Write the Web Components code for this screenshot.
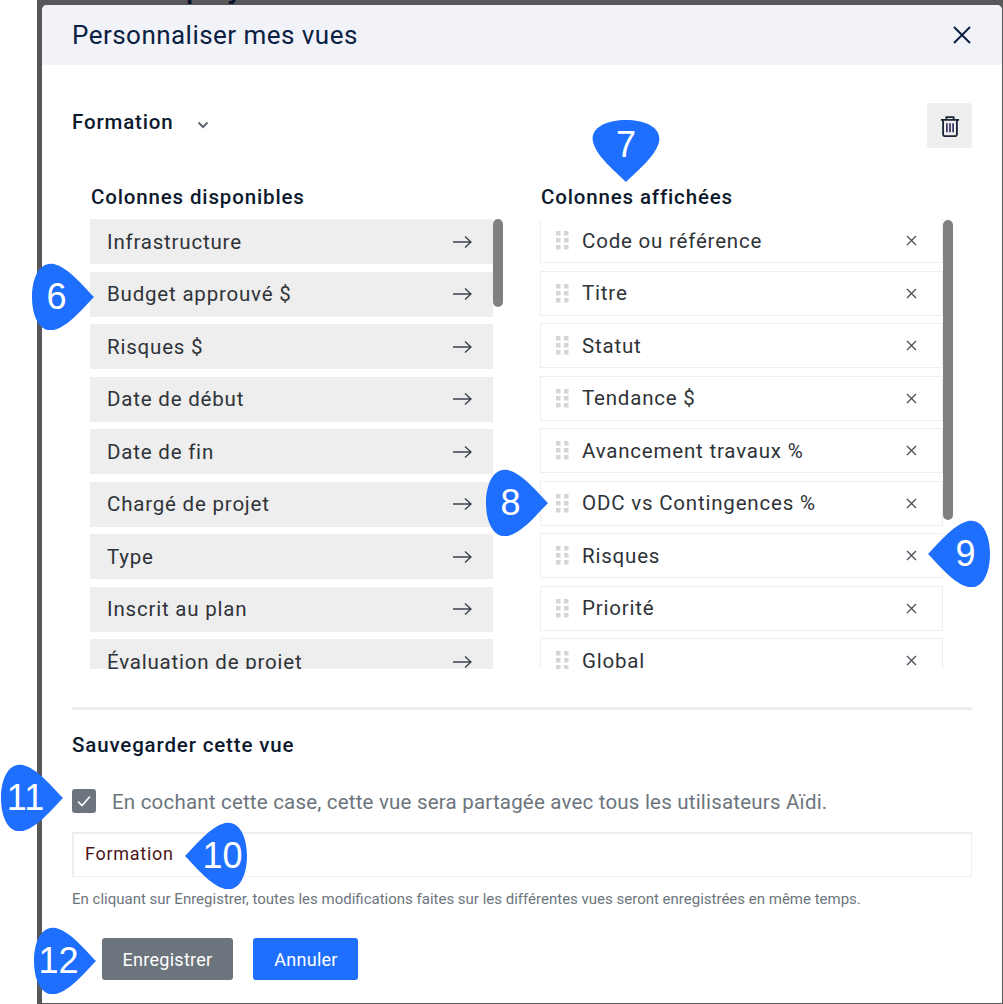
<!DOCTYPE html>
<html lang="fr">
<head>
<meta charset="utf-8">
<title>Personnaliser mes vues</title>
<style>
    html, body { margin: 0; padding: 0; background: #fff; }
    body { font-family: Roboto, "Liberation Sans", sans-serif; width: 1003px; height: 1004px; overflow: hidden; position: relative; }
</style>
</head>
<body>
<view-stage>
    <view-dialog heading="Personnaliser mes vues">
        <view-select slot="top" label="Formation"></view-select>

        <column-list slot="left" heading="Colonnes disponibles" thumb-top="0" thumb-height="88">
            <avail-row>Infrastructure</avail-row>
            <avail-row>Budget approuvé $</avail-row>
            <avail-row>Risques $</avail-row>
            <avail-row>Date de début</avail-row>
            <avail-row>Date de fin</avail-row>
            <avail-row>Chargé de projet</avail-row>
            <avail-row>Type</avail-row>
            <avail-row>Inscrit au plan</avail-row>
            <avail-row>Évaluation de projet</avail-row>
        </column-list>

        <column-list slot="right" heading="Colonnes affichées" thumb-top="1" thumb-height="300" shift="-0.75">
            <shown-row>Code ou référence</shown-row>
            <shown-row>Titre</shown-row>
            <shown-row>Statut</shown-row>
            <shown-row>Tendance $</shown-row>
            <shown-row>Avancement travaux %</shown-row>
            <shown-row>ODC vs Contingences %</shown-row>
            <shown-row>Risques</shown-row>
            <shown-row>Priorité</shown-row>
            <shown-row>Global</shown-row>
        </column-list>

        <save-form slot="bottom" value="Formation"></save-form>
    </view-dialog>

    <map-pin n="6" dir="right" x="32" y="263"></map-pin>
    <map-pin n="7" dir="down" x="592" y="120"></map-pin>
    <map-pin n="8" dir="right" x="486" y="469"></map-pin>
    <map-pin n="9" dir="left" x="928" y="520"></map-pin>
    <map-pin n="10" dir="left" x="185" y="822"></map-pin>
    <map-pin n="11" dir="right" x="1" y="764"></map-pin>
    <map-pin n="12" dir="right" x="34" y="927"></map-pin>
</view-stage>

<script>
const ROBOTO = 'Roboto, "Liberation Sans", sans-serif';

class ViewStage extends HTMLElement {
    constructor() {
        super();
        this.attachShadow({ mode: 'open' });
        this.shadowRoot.innerHTML = `
            <style>
                :host { display: block; position: relative; width: 1003px; height: 1004px; overflow: hidden; }
                .backdrop {
                    box-sizing: border-box;
                    margin-left: 37px;
                    width: 966px;
                    height: 1004px;
                    padding: 5px 1px 1px 5px;
                    background: #58585a;
                }
                /* page behind the dialog, only the descenders stick out */
                .behind {
                    position: absolute;
                    left: 186px;
                    top: -30px;
                    font: 500 30px/36px ${ROBOTO};
                    color: #0c1230;
                }
            </style>
            <div class="backdrop">
                <div class="behind">projet</div>
                <slot></slot>
            </div>
        `;
    }
}

class ViewDialog extends HTMLElement {
    constructor() {
        super();
        this.attachShadow({ mode: 'open' });
        this.shadowRoot.innerHTML = `
            <style>
                :host {
                    display: block;
                    position: relative;
                    height: 998px;
                    background: #fff;
                    border-radius: 5px 5px 0 0;
                    overflow: hidden;
                    font-family: ${ROBOTO};
                }
                header {
                    display: flex;
                    align-items: center;
                    justify-content: space-between;
                    height: 60px;
                    padding: 0 31px 0 30px;
                    background: #f1f3f8;
                }
                h1 { margin: 0; font-size: 26px; font-weight: 400; letter-spacing: .46px; color: #0b1f44; }
                svg { display: block; }
                .body { padding: 38px 30px 0; }
                .columns {
                    display: grid;
                    grid-template-columns: 413px 413px;
                    column-gap: 37px;
                    margin: 37px 0 38px 18px;
                }
            </style>
            <header>
                <h1>${this.getAttribute('heading')}</h1>
                <svg width="18" height="18" viewBox="0 0 18 18" fill="none" stroke="#0b1f44" stroke-width="2">
                    <path d="M1 1l16 16M17 1L1 17"/>
                </svg>
            </header>
            <div class="body">
                <slot name="top"></slot>
                <div class="columns">
                    <slot name="left"></slot>
                    <slot name="right"></slot>
                </div>
                <slot name="bottom"></slot>
            </div>
        `;
    }
}

class ViewSelect extends HTMLElement {
    constructor() {
        super();
        this.attachShadow({ mode: 'open' });
        this.shadowRoot.innerHTML = `
            <style>
                :host { display: flex; align-items: center; height: 45px; }
                .label { margin-bottom: 8px; font-size: 20.5px; font-weight: 500; letter-spacing: .85px; color: #0d1a2e; }
                .chev { margin: 0 0 2px 23px; }
                button {
                    margin-left: auto;
                    width: 45px;
                    height: 45px;
                    padding: 0;
                    border: 0;
                    border-radius: 3px;
                    background: #eeeeee;
                    display: flex;
                    align-items: center;
                    justify-content: center;
                }
                svg { display: block; }
            </style>
            <span class="label">${this.getAttribute('label')}</span>
            <svg class="chev" width="12" height="8" viewBox="0 0 12 8" fill="none" stroke="#5d6673" stroke-width="2">
                <path d="M1.5 1.5L6 6l4.5-4.5"/>
            </svg>
            <button>
                <svg width="20" height="22" viewBox="0 0 22 24" fill="none" stroke="#1c2536">
                    <path stroke-width="2" d="M1 5.2h20M7 5V2.2h8V5"/>
                    <path stroke-width="2" d="M3.4 5.2v16a2 2 0 0 0 2 2h11.2a2 2 0 0 0 2-2v-16"/>
                    <path stroke-width="1.9" stroke="#3a3566" d="M7.6 9v10M11 9v10M14.4 9v10"/>
                </svg>
            </button>
        `;
    }
}

class ColumnList extends HTMLElement {
    constructor() {
        super();
        this.attachShadow({ mode: 'open' });
        this.render();
    }

    render() {
        const thumbTop = this.getAttribute('thumb-top') || 0;
        const thumbHeight = this.getAttribute('thumb-height') || 100;
        const shift = this.getAttribute('shift') || 0;
        this.shadowRoot.innerHTML = `
            <style>
                :host { display: block; }
                h2 {
                    margin: 0 0 10px 1px;
                    font-size: 20.5px;
                    line-height: 24px;
                    font-weight: 500;
                    letter-spacing: .85px;
                    color: #0d1a2e;
                }
                .wrap { display: flex; height: 450px; }
                .list { width: 403px; height: 450px; overflow: hidden; }
                .inner { display: flex; flex-direction: column; gap: 7.5px; margin-top: ${shift}px; }
                .track { width: 10px; height: 450px; }
                .thumb {
                    width: 10px;
                    height: ${thumbHeight}px;
                    margin-top: ${thumbTop}px;
                    background: #808080;
                    border-radius: 5px;
                }
            </style>
            <h2>${this.getAttribute('heading')}</h2>
            <div class="wrap">
                <div class="list"><div class="inner"><slot></slot></div></div>
                <div class="track"><div class="thumb"></div></div>
            </div>
        `;
    }
}

class AvailRow extends HTMLElement {
    constructor() {
        super();
        this.attachShadow({ mode: 'open' });
        this.shadowRoot.innerHTML = `
            <style>
                :host {
                    box-sizing: border-box;
                    display: flex;
                    align-items: center;
                    justify-content: space-between;
                    flex: none;
                    height: 45px;
                    padding: 0 21px 0 17px;
                    background: #eeeeee;
                    font-size: 20.5px;
                    letter-spacing: .8px;
                    color: #2f3338;
                }
                svg { display: block; }
            </style>
            <slot></slot>
            <svg width="20" height="14" viewBox="0 0 20 14" fill="none" stroke="#3b4250" stroke-width="1.4">
                <path d="M1 7h18M13 1.5L19 7l-6 5.5"/>
            </svg>
        `;
    }
}

class ShownRow extends HTMLElement {
    constructor() {
        super();
        this.attachShadow({ mode: 'open' });
        this.shadowRoot.innerHTML = `
            <style>
                :host {
                    box-sizing: border-box;
                    display: flex;
                    align-items: center;
                    flex: none;
                    height: 45px;
                    padding: 0 25px 0 15px;
                    border: 1px solid #eeeeee;
                    font-size: 20.5px;
                    letter-spacing: .8px;
                    color: #2f3338;
                }
                svg { display: block; flex: none; }
                .grip { margin-right: 13px; }
                .x { margin-left: auto; }
            </style>
            <svg class="grip" width="13" height="19" viewBox="0 0 13 19" fill="#d6d6d6">
                <rect x="0" y="0" width="4.5" height="4.5"/><rect x="8" y="0" width="4.5" height="4.5"/>
                <rect x="0" y="7" width="4.5" height="4.5"/><rect x="8" y="7" width="4.5" height="4.5"/>
                <rect x="0" y="14" width="4.5" height="4.5"/><rect x="8" y="14" width="4.5" height="4.5"/>
            </svg>
            <slot></slot>
            <svg class="x" width="11" height="11" viewBox="0 0 11 11" fill="none" stroke="#4a4f57" stroke-width="1.3">
                <path d="M1 1l9 9M10 1l-9 9"/>
            </svg>
        `;
    }
}

class SaveForm extends HTMLElement {
    constructor() {
        super();
        this.attachShadow({ mode: 'open' });
        this.shadowRoot.innerHTML = `
            <style>
                :host { display: block; border-top: 3px solid #eeeeee; font-family: ${ROBOTO}; }
                h3 {
                    margin: 23px 0 0;
                    font-size: 20.5px;
                    line-height: 24px;
                    font-weight: 500;
                    letter-spacing: .85px;
                    color: #0d1a2e;
                }
                .check { display: flex; align-items: center; gap: 16px; margin-top: 32px; height: 24px; }
                .box {
                    width: 24px;
                    height: 24px;
                    flex: none;
                    border-radius: 3px;
                    background: #6c757d;
                    display: flex;
                    align-items: center;
                    justify-content: center;
                }
                .check span { padding-top: 2px; font-size: 20.5px; letter-spacing: .2px; color: #6c757d; }
                .input {
                    box-sizing: border-box;
                    height: 45px;
                    margin-top: 19px;
                    padding: 0 11px 4px;
                    border: 2px solid #eeeeee;
                    border-width: 2px 1px 1px 2px;
                    display: flex;
                    align-items: center;
                    font-size: 18px;
                    letter-spacing: .72px;
                    color: #4a1518;
                }
                .help { margin-top: 13px; font-size: 15px; line-height: 18px; color: #6c757d; }
                .actions { display: flex; gap: 20px; margin: 30px 0 0 30px; }
                button {
                    height: 42px;
                    border: 0;
                    border-radius: 3px;
                    color: #fff;
                    font: 400 18px ${ROBOTO};
                    letter-spacing: .27px;
                    padding: 0;
                }
                .save { width: 131px; background: #6c757d; }
                .cancel { width: 105px; background: #1f6fff; padding-left: 1px; }
            </style>
            <h3>Sauvegarder cette vue</h3>
            <div class="check">
                <div class="box">
                    <svg width="14" height="12" viewBox="0 0 14 12" fill="none" stroke="#fff" stroke-width="1.6">
                        <path d="M1 6.5L5 10.5 13 1.5"/>
                    </svg>
                </div>
                <span>En cochant cette case, cette vue sera partagée avec tous les utilisateurs Aïdi.</span>
            </div>
            <div class="input">${this.getAttribute('value')}</div>
            <div class="help">En cliquant sur Enregistrer, toutes les modifications faites sur les différentes vues seront enregistrées en même temps.</div>
            <div class="actions">
                <button class="save">Enregistrer</button>
                <button class="cancel">Annuler</button>
            </div>
        `;
    }
}

// Numbered callouts laid over the screenshot, the tip points at the feature
class MapPin extends HTMLElement {
    constructor() {
        super();
        this.attachShadow({ mode: 'open' });
        const dir = this.getAttribute('dir');
        const x = this.getAttribute('x');
        const y = this.getAttribute('y');
        const down = dir === 'down';
        const w = down ? 68 : 62;
        const h = down ? 62 : 67;
        // the drop is drawn pointing right, then turned
        const turn = { right: '', left: 'translate(62 0) scale(-1 1)', down: 'translate(68 0) rotate(90)' }[dir];
        const textBox = {
            right: 'left:0;top:0;width:49px;height:67px;',
            left: 'left:13px;top:0;width:49px;height:67px;',
            down: 'left:0;top:0;width:68px;height:50px;'
        }[dir];
        this.shadowRoot.innerHTML = `
            <style>
                :host { position: absolute; left: ${x}px; top: ${y}px; width: ${w}px; height: ${h}px; display: block; }
                svg { display: block; }
                span {
                    position: absolute;
                    ${textBox}
                    display: flex;
                    align-items: center;
                    justify-content: center;
                    font: 36px "Liberation Sans", Arial, sans-serif;
                    color: #fff;
                }
            </style>
            <svg width="${w}" height="${h}" viewBox="0 0 ${w} ${h}">
                <path transform="${turn}" fill="#1f6fff"
                    d="M62 34C50 22 37 5 22 1 8-2 0 14 0 34s8 36 22 33C37 63 50 46 62 34Z"/>
            </svg>
            <span>${this.getAttribute('n')}</span>
        `;
    }
}

customElements.define('view-stage', ViewStage);
customElements.define('view-dialog', ViewDialog);
customElements.define('view-select', ViewSelect);
customElements.define('column-list', ColumnList);
customElements.define('avail-row', AvailRow);
customElements.define('shown-row', ShownRow);
customElements.define('save-form', SaveForm);
customElements.define('map-pin', MapPin);
</script>
</body>
</html>
